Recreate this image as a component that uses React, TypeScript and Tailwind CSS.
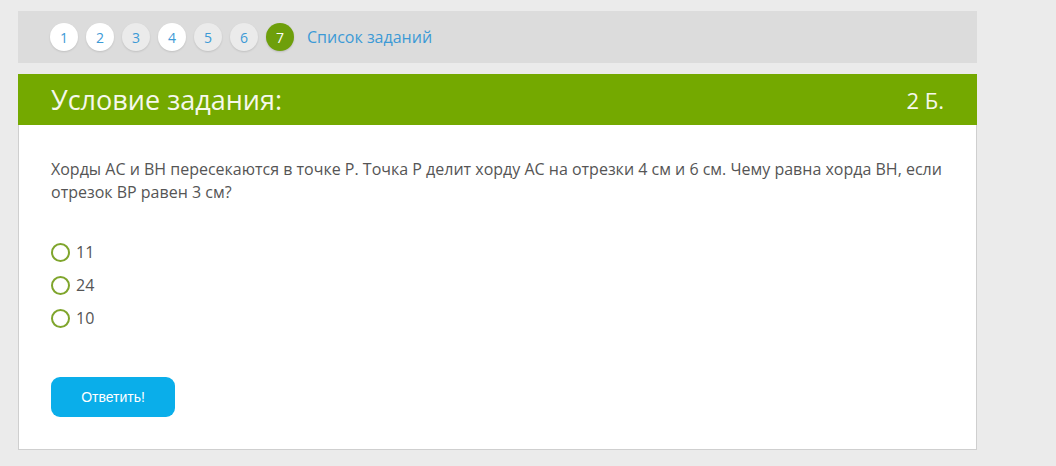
const pages = [
  { n: 1, state: "done" },
  { n: 2, state: "done" },
  { n: 3, state: "todo" },
  { n: 4, state: "done" },
  { n: 5, state: "todo" },
  { n: 6, state: "todo" },
  { n: 7, state: "current" },
];

const answers = ["11", "24", "10"];

export default function App() {
  return (
    <div
      className="min-h-[466px] bg-[#ebebeb] pl-[18px] pt-[11px]"
      style={{ fontFamily: '"Open Sans", "Noto Sans", sans-serif' }}
    >
      <div className="w-[959px]">
        <nav className="flex h-[52px] items-center bg-[#dcdcdc] pl-[32px]">
          <div className="flex items-center gap-[8px]">
            {pages.map((p) => (
              <span
                key={p.n}
                className={
                  p.state === "current"
                    ? "flex h-[28px] w-[28px] items-center justify-center rounded-full bg-[#6e9f0b] text-[14px] text-white shadow-[0_1px_2px_rgba(0,0,0,0.15)]"
                    : p.state === "done"
                      ? "flex h-[28px] w-[28px] items-center justify-center rounded-full bg-white text-[14px] text-[#3c9ad6] shadow-[0_1px_2px_rgba(0,0,0,0.12)]"
                      : "flex h-[28px] w-[28px] items-center justify-center rounded-full bg-[#ebebeb] text-[14px] text-[#3c9ad6] shadow-[0_1px_2px_rgba(0,0,0,0.12)]"
                }
              >
                {p.n}
              </span>
            ))}
          </div>
          <a className="ml-[13px] text-[16px] text-[#3c9ad6]">Список заданий</a>
        </nav>

        <section className="mt-[11px]">
          <header className="flex h-[51px] items-center justify-between bg-[#74a900] pl-[33px] pr-[33px] text-[#f6f8ec]">
            <h2 className="text-[27px] leading-none">Условие задания:</h2>
            <span className="text-[22px] leading-none">2 Б.</span>
          </header>

          <div className="border-x border-b border-[#cfcfcf] bg-white px-[32px] pb-[32px] pt-[33px]">
            <p className="text-[16px] leading-[23px] text-[#555555]">
              Хорды AC и BH пересекаются в точке P. Точка P делит хорду AC на отрезки 4 см и 6 см. Чему равна хорда BH, если отрезок BP равен 3 см?
            </p>

            <ul className="mt-[37px] flex flex-col gap-[11px]">
              {answers.map((a) => (
                <li key={a} className="flex h-[22px] items-center gap-[6px] text-[16px] text-[#555555]">
                  <span className="h-[19px] w-[19px] rounded-full border-2 border-[#7fa52c] bg-white" />
                  {a}
                </li>
              ))}
            </ul>

            <button
              className="mt-[48px] h-[40px] w-[124px] rounded-[9px] bg-[#0aaeea] text-[14px] text-white"
              style={{ fontFamily: '"Liberation Sans", Arial, sans-serif' }}
            >
              Ответить!
            </button>
          </div>
        </section>
      </div>
    </div>
  );
}
